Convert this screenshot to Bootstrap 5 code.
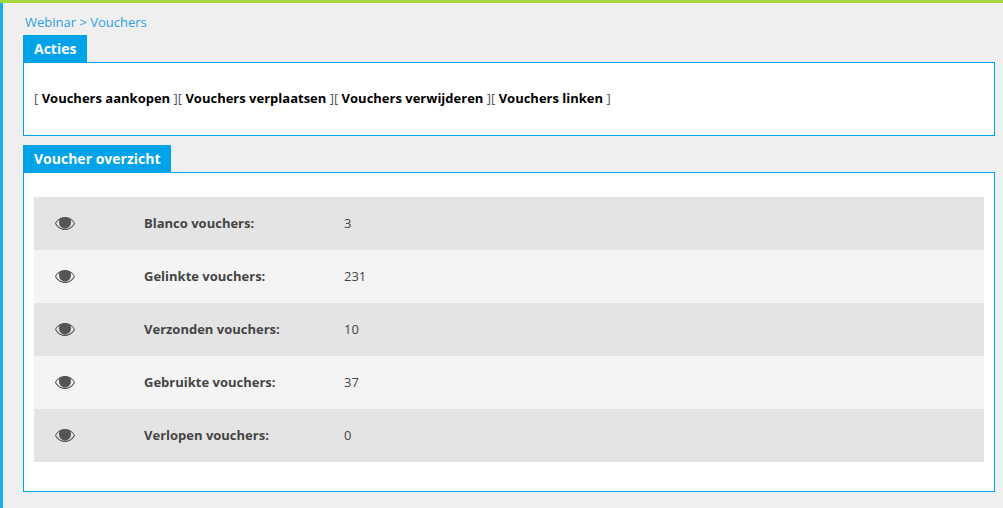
<!DOCTYPE html>
<html lang="nl">
<head>
    <meta charset="UTF-8">
    <meta name="viewport" content="width=device-width, initial-scale=1.0">
    <title>Vouchers</title>
    <link href="https://cdn.jsdelivr.net/npm/bootstrap@5.3.0/dist/css/bootstrap.min.css" rel="stylesheet">
    <style>
        html, body { height: 100%; }
        body {
            font-family: "Open Sans", "Noto Sans", sans-serif;
            font-size: 13px;
            background: #efefef;
            color: #444;
            overflow: hidden;
        }
        .top-line { height: 3px; background: #a3d63f; }
        .page-wrap {
            border-left: 3px solid #15aeef;
            height: calc(100% - 3px);
            padding: 11px 8px 0 20px;
        }
        .crumbs { height: 21px; line-height: 17px; padding-left: 2px; color: #2f9fe8; }
        .crumbs a { color: #2f9fe8; text-decoration: none; }
        .tab-title {
            display: inline-block;
            height: 27px;
            line-height: 27px;
            padding: 0 11px;
            background: #00a3e8;
            color: #fff;
            font-weight: 700;
            font-size: 14px;
        }
        .tab-box { background: #fff; border: 1px solid #00a3e8; }
        .actions-box { height: 74px; padding: 26px 10px 0; margin-bottom: 9px; line-height: 18px; color: #555; }
        .actions-box a { color: #000; font-weight: 700; text-decoration: none; }
        .overview-box { height: 320px; padding: 24px 10px 0; }
        .voucher-row { height: 53px; background: #e4e4e4; }
        .voucher-row:nth-child(even) { background: #f4f4f4; }
        .eye-cell { width: 110px; padding-left: 21px; }
        .label-cell { width: 200px; font-weight: 700; color: #444; }
    </style>
</head>
<body>
    <div class="top-line"></div>
    <div class="page-wrap">
        <div class="crumbs"><a href="#">Webinar</a> &gt; <a href="#">Vouchers</a></div>

        <div class="d-flex"><div class="tab-title">Acties</div></div>
        <div class="tab-box actions-box">
            [ <a href="#">Vouchers aankopen</a> ][ <a href="#">Vouchers verplaatsen</a> ][ <a href="#">Vouchers verwijderen</a> ][ <a href="#">Vouchers linken</a> ]
        </div>

        <div class="d-flex"><div class="tab-title">Voucher overzicht</div></div>
        <div class="tab-box overview-box">
            <div>
                <div class="voucher-row d-flex align-items-center">
                    <div class="eye-cell d-flex"><svg width="20" height="13" viewBox="0 0 20 13"><path fill="#555" fill-rule="evenodd" d="M10 0C5.6 0 2 2.6 0 6.5 2 10.400 5.600 13 10 13s8-2.600 10-6.500C18 2.600 14.400 0 10 0zM4.500 2.800A6 6 0 0 0 4 5.500a6 6 0 0 0 12 0 6 6 0 0 0-.5-2.700c1.500.8 2.700 2.100 3.400 3.700C17 9.800 13.800 11.800 10 11.800S3 9.800 1.100 6.500c.7-1.600 1.900-2.900 3.400-3.700z"/></svg></div>
                    <div class="label-cell">Blanco vouchers:</div>
                    <div>3</div>
                </div>
                <div class="voucher-row d-flex align-items-center">
                    <div class="eye-cell d-flex"><svg width="20" height="13" viewBox="0 0 20 13"><path fill="#555" fill-rule="evenodd" d="M10 0C5.6 0 2 2.6 0 6.5 2 10.400 5.600 13 10 13s8-2.600 10-6.500C18 2.600 14.400 0 10 0zM4.500 2.800A6 6 0 0 0 4 5.500a6 6 0 0 0 12 0 6 6 0 0 0-.5-2.700c1.500.8 2.700 2.100 3.400 3.700C17 9.800 13.800 11.800 10 11.800S3 9.800 1.100 6.500c.7-1.600 1.900-2.900 3.400-3.700z"/></svg></div>
                    <div class="label-cell">Gelinkte vouchers:</div>
                    <div>231</div>
                </div>
                <div class="voucher-row d-flex align-items-center">
                    <div class="eye-cell d-flex"><svg width="20" height="13" viewBox="0 0 20 13"><path fill="#555" fill-rule="evenodd" d="M10 0C5.6 0 2 2.6 0 6.5 2 10.400 5.600 13 10 13s8-2.600 10-6.500C18 2.600 14.400 0 10 0zM4.500 2.800A6 6 0 0 0 4 5.500a6 6 0 0 0 12 0 6 6 0 0 0-.5-2.700c1.500.8 2.700 2.100 3.400 3.700C17 9.800 13.800 11.800 10 11.800S3 9.800 1.100 6.500c.7-1.600 1.900-2.900 3.400-3.700z"/></svg></div>
                    <div class="label-cell">Verzonden vouchers:</div>
                    <div>10</div>
                </div>
                <div class="voucher-row d-flex align-items-center">
                    <div class="eye-cell d-flex"><svg width="20" height="13" viewBox="0 0 20 13"><path fill="#555" fill-rule="evenodd" d="M10 0C5.6 0 2 2.6 0 6.5 2 10.400 5.600 13 10 13s8-2.600 10-6.500C18 2.600 14.400 0 10 0zM4.500 2.800A6 6 0 0 0 4 5.500a6 6 0 0 0 12 0 6 6 0 0 0-.5-2.700c1.500.8 2.700 2.100 3.400 3.700C17 9.800 13.800 11.800 10 11.800S3 9.800 1.100 6.500c.7-1.600 1.900-2.900 3.400-3.700z"/></svg></div>
                    <div class="label-cell">Gebruikte vouchers:</div>
                    <div>37</div>
                </div>
                <div class="voucher-row d-flex align-items-center">
                    <div class="eye-cell d-flex"><svg width="20" height="13" viewBox="0 0 20 13"><path fill="#555" fill-rule="evenodd" d="M10 0C5.6 0 2 2.6 0 6.5 2 10.400 5.600 13 10 13s8-2.600 10-6.500C18 2.600 14.400 0 10 0zM4.500 2.800A6 6 0 0 0 4 5.500a6 6 0 0 0 12 0 6 6 0 0 0-.5-2.700c1.500.8 2.700 2.100 3.400 3.700C17 9.800 13.800 11.800 10 11.800S3 9.800 1.100 6.500c.7-1.600 1.900-2.900 3.400-3.700z"/></svg></div>
                    <div class="label-cell">Verlopen vouchers:</div>
                    <div>0</div>
                </div>
            </div>
        </div>
    </div>
    <script src="https://cdn.jsdelivr.net/npm/bootstrap@5.3.0/dist/js/bootstrap.bundle.min.js"></script>
</body>
</html>
